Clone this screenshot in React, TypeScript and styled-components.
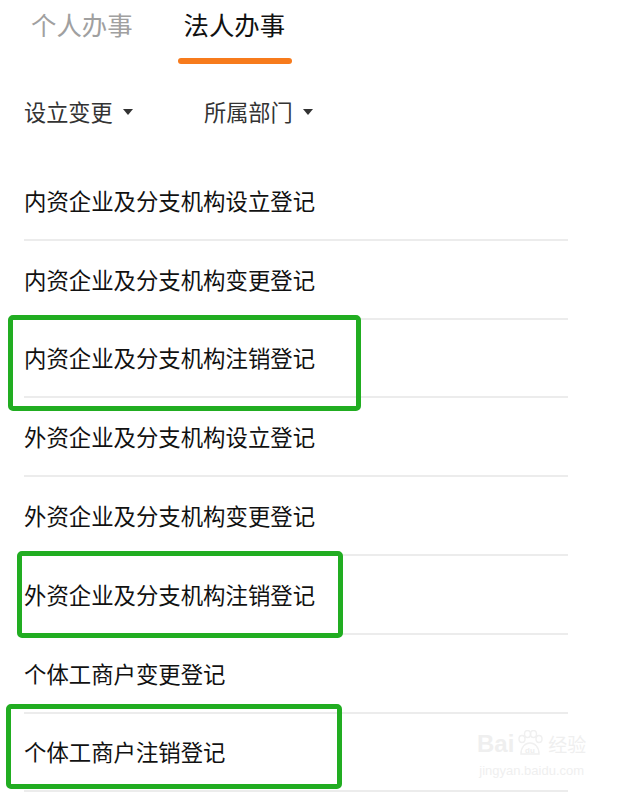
import React from 'react';
import styled, { createGlobalStyle } from 'styled-components';

const tabs = ['个人办事', '法人办事'];
const filters = ['设立变更', '所属部门'];
const items = [
  '内资企业及分支机构设立登记',
  '内资企业及分支机构变更登记',
  '内资企业及分支机构注销登记',
  '外资企业及分支机构设立登记',
  '外资企业及分支机构变更登记',
  '外资企业及分支机构注销登记',
  '个体工商户变更登记',
  '个体工商户注销登记',
];

// annotation boxes drawn over the screenshot
const marks = [
  { left: 8, top: 315, width: 353, height: 96 },
  { left: 17, top: 551, width: 326, height: 87 },
  { left: 6, top: 704, width: 336, height: 85 },
];

export default function App() {
  return (
    <Page>
      <GlobalStyle />
      <Tabs>
        {tabs.map((t, i) => (
          <Tab key={t} $active={i === 1}>
            <span>{t}</span>
            <Underline $active={i === 1} />
          </Tab>
        ))}
      </Tabs>
      <Filters>
        {filters.map((f) => (
          <Filter key={f}>
            {f}
            <Caret />
          </Filter>
        ))}
      </Filters>
      <List>
        {items.map((it) => (
          <Row key={it}>{it}</Row>
        ))}
      </List>
      {marks.map((m, i) => (
        <Mark key={i} style={{ left: m.left, top: m.top, width: m.width, height: m.height }} />
      ))}
      <Watermark>
        <div className="logo">
          <span>Bai</span>
          <svg width="30" height="28" viewBox="0 0 30 28">
            <g fill="none" stroke="#f0f0f0" strokeWidth="1.5">
              <ellipse cx="7" cy="9" rx="3" ry="3.5" />
              <ellipse cx="12.5" cy="4" rx="3" ry="3.5" />
              <ellipse cx="18.5" cy="4" rx="3" ry="3.5" />
              <ellipse cx="24" cy="9" rx="3" ry="3.5" />
              <path d="M6 24 C6 17 10 13 15 13 C20 13 24 17 24 24 Z" />
            </g>
            <text x="15" y="22.5" fontSize="8" textAnchor="middle" fill="#eeeeee">du</text>
          </svg>
          <span className="cn">经验</span>
        </div>
        <div className="url">jingyan.baidu.com</div>
      </Watermark>
    </Page>
  );
}

const GlobalStyle = createGlobalStyle`
  body {
    margin: 0;
    background: #fff;
    font-family: "Noto Sans CJK SC", "Noto Sans", sans-serif;
  }
`;

const Page = styled.div`
  position: relative;
  width: 621px;
  height: 793px;
  overflow: hidden;
  background: #fff;
`;

const Tabs = styled.div`
  display: flex;
  gap: 38px;
  padding-left: 25px;
`;

const Tab = styled.div<{ $active: boolean }>`
  display: flex;
  flex-direction: column;
  align-items: stretch;

  span {
    display: block;
    padding: 0 7px 0 6px;
    font-size: 25.4px;
    line-height: 48px;
    color: ${(p) => (p.$active ? '#111' : '#a0a0a0')};
  }
`;

const Underline = styled.div<{ $active: boolean }>`
  height: 6px;
  margin-top: 10px;
  border-radius: 3px;
  background: ${(p) => (p.$active ? '#f77b1c' : 'transparent')};
`;

const Filters = styled.div`
  display: flex;
  padding-left: 24px;
  margin-top: 25px;
  height: 44px;
`;

const Filter = styled.div`
  width: 180px;
  display: flex;
  align-items: center;
  gap: 10px;
  font-size: 22.2px;
  color: #333;
`;

const Caret = styled.i`
  width: 0;
  height: 0;
  border-left: 5.5px solid transparent;
  border-right: 5.5px solid transparent;
  border-top: 6px solid #333;
  margin-top: 2px;
`;

const List = styled.div`
  margin: 29px 53px 0 24px;
`;

const Row = styled.div`
  box-sizing: border-box;
  height: 78.8px;
  display: flex;
  align-items: center;
  padding-bottom: 1px;
  border-bottom: 2px solid #ececec;
  font-size: 22.4px;
  color: #111;
`;

const Mark = styled.div`
  position: absolute;
  box-sizing: border-box;
  border: 5px solid #21ad21;
  border-radius: 5px;
`;

const Watermark = styled.div`
  position: absolute;
  left: 477px;
  top: 730px;
  display: flex;
  flex-direction: column;
  align-items: center;
  color: #efefef;

  .logo {
    display: flex;
    align-items: flex-end;
    gap: 1px;
    font-family: "Liberation Sans", sans-serif;
    font-size: 24px;
    font-weight: bold;
    line-height: 28px;
  }

  .cn {
    font-family: "Noto Sans CJK SC", sans-serif;
    font-size: 19px;
    font-weight: normal;
    margin-left: 2px;
  }

  .url {
    font-family: "Liberation Sans", sans-serif;
    font-size: 13px;
    margin-top: 5px;
  }
`;
